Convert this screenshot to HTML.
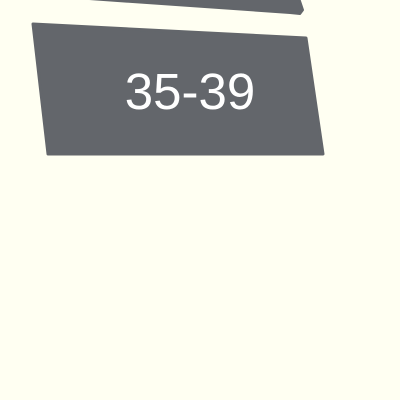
<!DOCTYPE html>
<html><head><style>
html,body{margin:0;padding:0;width:400px;height:400px;overflow:hidden;background:#fffff2;}
svg{position:absolute;left:0;top:0;}
</style></head><body>
<svg width="400" height="400" viewBox="0 0 400 400">
<polygon points="75,-2 299,-2 303,10 300,14 290,13" fill="#63666b" stroke="#63666b" stroke-width="2" stroke-linejoin="round"/>
<polygon points="33,24 306,38 323,154 48,154" fill="#63666b" stroke="#63666b" stroke-width="3" stroke-linejoin="round"/>
<text x="190" y="109" text-anchor="middle" font-family="Liberation Sans, sans-serif" font-size="51" fill="#ffffff">35-39</text>
</svg>
</body></html>
